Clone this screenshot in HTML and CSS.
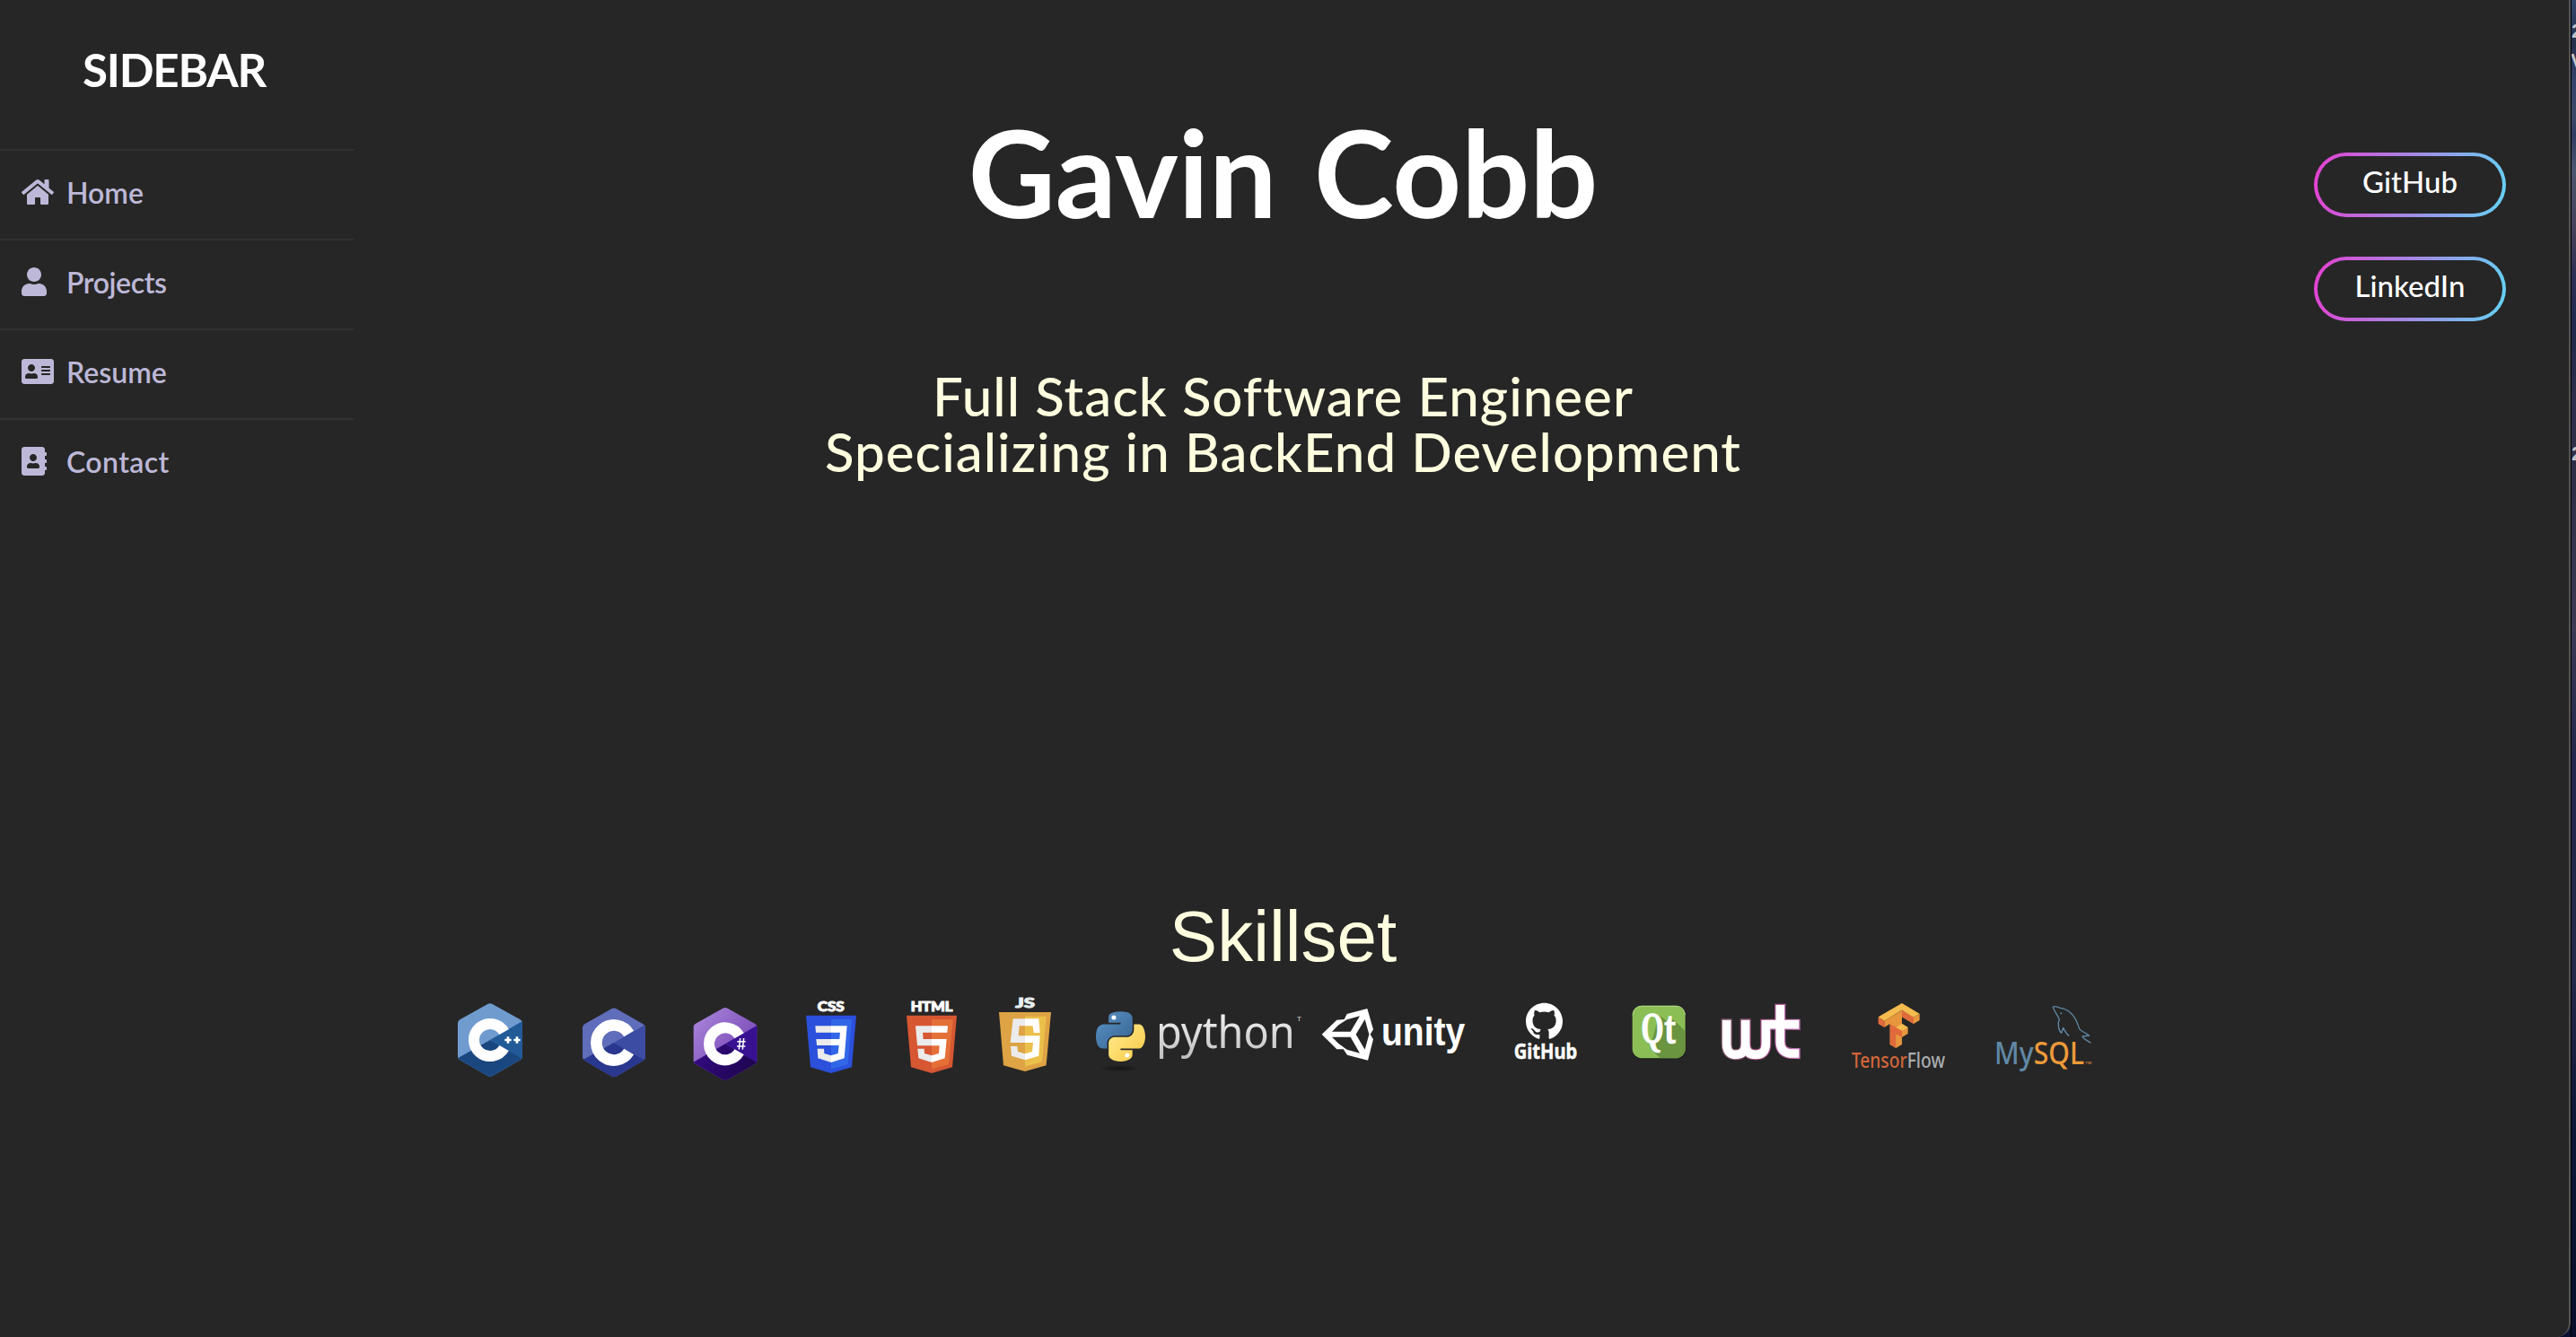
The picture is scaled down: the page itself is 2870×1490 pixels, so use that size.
FILE: index.html
```html
<!DOCTYPE html>
<html lang="en">
<head>
<meta charset="utf-8">
<title>Gavin Cobb</title>
<link rel="stylesheet" href="styles.css">
</head>
<body>
<div class="desktop">
  <div class="window">
    <nav class="sidebar">
      <header class="sidebar-title">SIDEBAR</header>
      <ul class="menu">
        <li><a><svg class="icon" viewBox="0 0 576 512"><path d="M280.37 148.26L96 300.11V464a16 16 0 0 0 16 16l112.06-.29a16 16 0 0 0 15.92-16V368a16 16 0 0 1 16-16h64a16 16 0 0 1 16 16v95.64a16 16 0 0 0 16 16.05L464 480a16 16 0 0 0 16-16V300L295.67 148.26a12.19 12.19 0 0 0-15.3 0zM571.6 251.47L488 182.56V44.05a12 12 0 0 0-12-12h-56a12 12 0 0 0-12 12v72.61L318.47 43a48 48 0 0 0-61 0L4.34 251.47a12 12 0 0 0-1.6 16.9l25.5 31A12 12 0 0 0 45.15 301l235.22-193.74a12.19 12.19 0 0 1 15.3 0L530.9 301a12 12 0 0 0 16.9-1.6l25.5-31a12 12 0 0 0-1.7-16.93z"/></svg><span>Home</span></a></li>
        <li><a><svg class="icon" viewBox="0 0 576 512"><path d="M224 256c70.7 0 128-57.3 128-128S294.7 0 224 0 96 57.3 96 128s57.3 128 128 128zm89.6 32h-16.7c-22.2 10.2-46.9 16-72.9 16s-50.6-5.8-72.9-16h-16.7C60.2 288 0 348.2 0 422.4V464c0 26.5 21.5 48 48 48h352c26.5 0 48-21.5 48-48v-41.6c0-74.2-60.2-134.4-134.4-134.4z"/></svg><span class="tight">Projects</span></a></li>
        <li><a><svg class="icon" viewBox="0 0 576 512"><path d="M528 32H48C21.5 32 0 53.5 0 80v352c0 26.5 21.5 48 48 48h480c26.5 0 48-21.5 48-48V80c0-26.5-21.5-48-48-48zm-352 96c35.3 0 64 28.7 64 64s-28.7 64-64 64-64-28.7-64-64 28.7-64 64-64zm112 236.8c0 10.6-10 19.2-22.4 19.2H86.4C74 384 64 375.4 64 364.8v-19.2c0-31.8 30.1-57.6 67.2-57.6h5c12.3 5.1 25.7 8 39.8 8s27.6-2.9 39.8-8h5c37.1 0 67.2 25.8 67.2 57.6v19.2zM512 312c0 4.4-3.6 8-8 8H360c-4.4 0-8-3.6-8-8v-16c0-4.4 3.6-8 8-8h144c4.4 0 8 3.6 8 8v16zm0-64c0 4.4-3.6 8-8 8H360c-4.4 0-8-3.6-8-8v-16c0-4.4 3.6-8 8-8h144c4.4 0 8 3.6 8 8v16zm0-64c0 4.4-3.6 8-8 8H360c-4.4 0-8-3.6-8-8v-16c0-4.4 3.6-8 8-8h144c4.4 0 8 3.6 8 8v16z"/></svg><span>Resume</span></a></li>
        <li><a><svg class="icon" viewBox="0 0 576 512"><path d="M436 160c6.6 0 12-5.4 12-12v-40c0-6.6-5.4-12-12-12h-20V48c0-26.5-21.5-48-48-48H48C21.5 0 0 21.5 0 48v416c0 26.5 21.5 48 48 48h320c26.5 0 48-21.5 48-48v-48h20c6.6 0 12-5.4 12-12v-40c0-6.6-5.4-12-12-12h-20v-64h20c6.6 0 12-5.4 12-12v-40c0-6.6-5.4-12-12-12h-20v-64h20zm-228-32c35.3 0 64 28.7 64 64s-28.7 64-64 64-64-28.7-64-64 28.7-64 64-64zm112 236.8c0 10.6-10 19.2-22.4 19.2H118.4C106 384 96 375.4 96 364.8v-19.2c0-31.8 30.1-57.6 67.2-57.6h5c12.3 5.1 25.7 8 39.8 8s27.6-2.9 39.8-8h5c37.1 0 67.2 25.8 67.2 57.6v19.2z"/></svg><span class="loose">Contact</span></a></li>
      </ul>
    </nav>

    <main class="main">
      <h1 class="name">Gavin Cobb</h1>
      <p class="tagline">Full Stack Software Engineer<br>Specializing in BackEnd Development</p>
      <h2 class="skills-title">Skillset</h2>
      <div class="skills">
        <svg class="logo cpp" viewBox="45 0 246 390">
          <clipPath id="hexCpp"><path d="M160 87Q168 82 176 87L269 139Q276 143 276 151V262Q276 270 269 274L176 327Q168 332 160 327L67 274Q60 270 60 262V151Q60 143 67 139Z"/></clipPath>
          <g clip-path="url(#hexCpp)"><path fill="#6f9bcf" d="M60 80H276V330H60Z"/><path fill="#1a4780" d="M56 270L168 207L280 270V335H56Z"/><path fill="#225a98" d="M168 207L280 142V272Z"/></g>
          <path class="ring" stroke-width="36" d="M214.800 180A54 54 0 1 0 214.800 234"/>
          <path class="plus" d="M217 207H239M228 196V218M247 207H269M258 196V218"/>
        </svg>
        <svg class="logo c" viewBox="450 0 252 390">
          <clipPath id="hexC"><path d="M575 102Q582 98 589 102L680 154Q687 158 687 166V264Q687 272 680 276L589 329Q582 333 575 329L484 276Q477 272 477 264V166Q477 158 484 154Z"/></clipPath>
          <g clip-path="url(#hexC)"><path fill="#5f6dba" d="M477 98H687V333H477Z"/><path fill="#2a378e" d="M473 276L582 216L691 276V335H473Z"/><path fill="#3c4ca3" d="M582 216L691 154V278Z"/></g>
          <path class="ring" stroke-width="38" d="M632 186A58.500 58.500 0 1 0 632 246"/>
        </svg>
        <svg class="logo csharp" viewBox="831 0 246 390">
          <defs><linearGradient id="csA" x1="0" y1="0" x2="1" y2="1"><stop offset="0" stop-color="#ac8ade"/><stop offset=".6" stop-color="#8355bd"/></linearGradient><linearGradient id="csB" x1="0" y1="0" x2="1" y2=".4"><stop offset="0" stop-color="#370c8a"/><stop offset="1" stop-color="#1e0550"/></linearGradient>
          <clipPath id="hexCs"><path d="M946 101Q954 97 962 101L1054 153Q1061 157 1061 165V275Q1061 283 1054 287L962 340Q954 344 946 340L854 287Q847 283 847 275V165Q847 157 854 153Z"/></clipPath></defs>
          <g clip-path="url(#hexCs)"><path fill="url(#csA)" d="M847 97H1061V344H847Z"/><path fill="url(#csB)" d="M843 284L954 220L1065 284V346H843Z"/><path fill="#371192" d="M954 220L1065 156V286Z"/></g>
          <path class="ring" stroke-width="36" d="M1000.800 193A54 54 0 1 0 1000.800 247"/>
          <path fill="none" stroke="#fff" stroke-width="4.500" d="M1004 201L1000 239M1016 201L1012 239M994 212H1022M993 228H1021"/>
        </svg>
        <svg class="logo css" viewBox="75 0 186 390">
          <defs><linearGradient id="h168" gradientUnits="userSpaceOnUse" x1="167" x2="169" y1="0" y2="0"><stop offset="0" stop-color="#ebebeb"/><stop offset="1" stop-color="#fff"/></linearGradient></defs>
          <text class="badge" x="122" y="110" textLength="90" lengthAdjust="spacingAndGlyphs">CSS</text>
          <path fill="#2b50dc" d="M84 125H252L237 298L168 318L99 298Z"/><path fill="#3268e8" d="M168 138H237L224 289L168 304Z"/>
          <path fill="url(#h168)" d="M115 160H221L212 268L168 282L124 268L122 236H144L145 252L168 259L191 252L194 225H120L118 204H196L198 182H117Z"/>
        </svg>
        <svg class="logo html" viewBox="411 0 186 390">
          <defs><linearGradient id="h504" gradientUnits="userSpaceOnUse" x1="503" x2="505" y1="0" y2="0"><stop offset="0" stop-color="#ebebeb"/><stop offset="1" stop-color="#fff"/></linearGradient></defs>
          <text class="badge" x="434" y="110" textLength="140" lengthAdjust="spacingAndGlyphs">HTML</text>
          <path fill="#d65732" d="M420 125H588L573 298L504 318L435 298Z"/><path fill="#e47038" d="M504 138H575L561 289L504 304Z"/>
          <path fill="url(#h504)" d="M450 160H558L556 182H474L476 204H554L548 268L504 282L460 268L457 236H479L480 252L504 259L528 252L530 226H456Z"/>
        </svg>
        <svg class="logo js" viewBox="720 0 192 390">
          <defs><linearGradient id="h816" gradientUnits="userSpaceOnUse" x1="815" x2="817" y1="0" y2="0"><stop offset="0" stop-color="#ebebeb"/><stop offset="1" stop-color="#fff"/></linearGradient></defs>
          <text class="badge pale" x="784" y="98" textLength="65" lengthAdjust="spacingAndGlyphs">JS</text>
          <path fill="#dda344" d="M729 114H903L887 292L816 312L744 292Z"/><path fill="#ebc04a" d="M816 128H887L873 280L816 296Z"/>
          <path fill="url(#h816)" d="M776 136H862L866 183H845L842 160H797L794 193H866L862 260L816 274L771 260L768 228H790L792 246L816 253L840 246L843 216H767Z"/>
        </svg>
        <svg class="logo python" viewBox="54 0 702 390">
          <defs><linearGradient id="pyA" x1="0" y1="0" x2="1" y2="1"><stop offset="0" stop-color="#5a93c7"/><stop offset="1" stop-color="#36638f"/></linearGradient><linearGradient id="pyB" x1="0" y1="0" x2="1" y2="1"><stop offset=".2" stop-color="#ffe681"/><stop offset="1" stop-color="#f6c746"/></linearGradient><radialGradient id="pyS"><stop offset="0" stop-color="#151515"/><stop offset="1" stop-color="#262626"/></radialGradient>
          <linearGradient id="pyT" x1="0" y1="0" x2="0" y2="1"><stop offset="0" stop-color="#fff"/><stop offset="1" stop-color="#bbb"/></linearGradient></defs>
          <ellipse cx="142" cy="302" rx="68" ry="13" fill="url(#pyS)"/>
          <g transform="translate(42.200 108.800) scale(1.613)"><path fill="url(#pyA)" d="M63.391 1.988c-4.222.02-8.252.379-11.8 1.007-10.45 1.846-12.346 5.71-12.346 12.837v9.411h24.693v3.137H29.977c-7.176 0-13.46 4.313-15.426 12.521-2.268 9.405-2.368 15.275 0 25.096 1.755 7.311 5.947 12.519 13.124 12.519h8.491V67.234c0-8.151 7.051-15.34 15.426-15.34h24.665c6.866 0 12.346-5.654 12.346-12.548V15.833c0-6.693-5.646-11.72-12.346-12.837-4.244-.706-8.645-1.027-12.866-1.008z"/><path fill="url(#pyB)" d="M91.682 28.38v10.966c0 8.5-7.208 15.655-15.426 15.655H51.591c-6.756 0-12.346 5.783-12.346 12.549v23.515c0 6.691 5.818 10.628 12.346 12.547 7.816 2.297 16.221 2.713 24.665 0 6.216-1.801 12.346-5.423 12.346-12.547v-9.412H63.938v-3.138h37.012c7.176 0 9.852-5.005 12.348-12.519 2.578-7.735 2.467-15.174 0-25.096-1.774-7.145-5.161-12.521-12.348-12.521h-9.268z"/><circle cx="50" cy="14.300" r="4.700" fill="#fff"/><circle cx="77.800" cy="92.600" r="4.700" fill="#fff"/></g>
          <text class="python-word" x="264" y="235" textLength="464" lengthAdjust="spacingAndGlyphs" fill="url(#pyT)">python</text>
          <text class="tm" x="735" y="144" font-size="24" fill="#ddd">T</text>
        </svg>
        <svg class="logo unity" viewBox="810 0 495 390">
          <path fill="#fff" fill-rule="evenodd" d="M818 188L868 140L893 138L902 120L970 102L990 172L980 188L990 205L972 275L903 257L890 238H868ZM852 179H914L945 127L902 139L874 157ZM852 197H914L945 251L902 239L874 219ZM932 188L962 239L976 188L962 138Z"/>
          <text class="unity-word" x="1017" y="225" textLength="280" lengthAdjust="spacingAndGlyphs">unity</text>
        </svg>
        <svg class="logo github" viewBox="75 0 225 390">
          <path fill="#fff" transform="translate(120 83) scale(7.690)" d="M8 0C3.580 0 0 3.580 0 8c0 3.540 2.290 6.530 5.470 7.590.4.07.55-.17.55-.38 0-.19-.01-.82-.01-1.490-2.010.37-2.530-.49-2.690-.94-.09-.23-.48-.94-.82-1.130-.28-.15-.68-.52-.01-.53.63-.01 1.080.58 1.230.82.72 1.210 1.870.87 2.330.66.07-.52.28-.87.51-1.070-1.780-.2-3.640-.89-3.640-3.950 0-.87.31-1.590.82-2.150-.08-.2-.36-1.020.08-2.120 0 0 .67-.21 2.200.82.64-.18 1.320-.27 2-.27.68 0 1.360.09 2 .27 1.530-1.040 2.200-.82 2.200-.82.44 1.100.16 1.920.08 2.120.51.56.82 1.270.82 2.150 0 3.070-1.870 3.750-3.650 3.950.29.25.54.73.54 1.480 0 1.070-.01 1.930-.01 2.200 0 .21.15.46.55.38A8.013 8.013 0 0 0 16 8c0-4.420-3.580-8-8-8z"/>
          <text class="github-word" x="80" y="269" textLength="212" lengthAdjust="spacingAndGlyphs">GitHub</text>
        </svg>
        <svg class="logo qt" viewBox="465 0 195 390">
          <clipPath id="qtBox"><rect x="476" y="92" width="177" height="176" rx="32"/></clipPath>
          <rect x="477" y="95" width="178" height="176" rx="32" fill="#171717"/>
          <g clip-path="url(#qtBox)"><path fill="#8bbf56" d="M470 90H660V270H470Z"/><path fill="#6a9440" d="M565 124L600 150L612 137L660 184V270H572L535 235Z"/><path fill="none" stroke="#b4d98e" stroke-width="4" d="M476 124Q476 93 508 93H621Q653 93 653 124"/></g>
          <text class="qt-word" x="504" y="219" textLength="118" lengthAdjust="spacingAndGlyphs">Qt</text>
        </svg>
        <svg class="logo wt" viewBox="762 0 285 390">
          <defs><linearGradient id="wtG" gradientUnits="userSpaceOnUse" x1="772" x2="1038" y1="0" y2="0"><stop offset="0" stop-color="#80596a"/><stop offset=".5" stop-color="#a04b80"/><stop offset="1" stop-color="#c774bd"/></linearGradient>
          <path id="wtMark" d="M791 140V220Q791 256 822 256Q854 256 854 220V140M854 220Q854 256 888 256Q922 256 922 220V155H1033M970 90V212Q970 252 1012 252H1033"/></defs>
          <use href="#wtMark" fill="none" stroke="url(#wtG)" stroke-width="36"/>
          <path stroke="url(#wtG)" stroke-width="4" d="M773 138H809M836 138H872M952 88H989M1035 137V174M1035 234V271"/>
          <use href="#wtMark" fill="none" stroke="#fff" stroke-width="29"/>
        </svg>
        <svg class="logo tensorflow" viewBox="90 0 330 390">
          <path fill="#e8963e" d="M208 143L267 108L306 131L326 119V141L306 153L267 130V152L287 165V186L267 198V222L247 234L227 222V153L208 165Z"/>
          <path fill="#e06a3b" d="M188 130L208 143V165L188 153ZM227 154L247 165V234L227 222ZM267 108L306 131V153L267 130ZM247 165L267 176V198L247 187Z"/>
          <path fill="#f4bb4f" d="M188 130L267 84L326 119L306 131L267 107L208 143ZM247 165L267 153L287 165L267 176Z"/>
          <text class="tf-word" x="98" y="299" textLength="313" lengthAdjust="spacingAndGlyphs"><tspan fill="#d3663a">Tensor</tspan><tspan fill="#a9adb0">Flow</tspan></text>
        </svg>
        <svg class="logo mysql" viewBox="573 0 336 390">
          <path fill="none" stroke="#6188a5" stroke-width="4" stroke-linejoin="round" d="M826 193C818 188 812 178 806 166L800 184C790 176 787 152 793 138C786 120 774 108 772 97C778 92 788 96 796 100C830 104 850 135 860 170C868 180 880 182 893 192L870 195C875 206 888 208 898 217"/>
          <circle cx="799" cy="118" r="3" fill="#6188a5"/>
          <text class="my-word" x="576" y="288" textLength="300" lengthAdjust="spacingAndGlyphs"><tspan fill="#6188a5">My</tspan><tspan fill="#ee9a3a">SQL</tspan></text>
          <text class="tm" x="879" y="288" font-size="13" fill="#ee9a3a" textLength="22" lengthAdjust="spacingAndGlyphs">TM</text>
        </svg>
      </div>
    </main>

    <aside class="links">
      <a class="pill">GitHub</a>
      <a class="pill">LinkedIn</a>
    </aside>
  </div>
  <div class="wallpaper"><span class="file f1">2</span><span class="file f2">V</span><span class="file f3">2</span></div>
</div>
</body>
</html>
```
FILE: styles.css
```css
* { box-sizing: border-box; margin: 0; padding: 0; }
body { width: 2870px; height: 1490px; overflow: hidden; background: #000; font-family: Lato, "Liberation Sans", sans-serif; }
.desktop { display: grid; grid-template-columns: 2864px 6px; height: 1490px; background: #0b1230; }
.window { display: grid; grid-template-columns: 394px 1fr 394px; background: #262626; border-right: 2px solid #555; border-bottom-right-radius: 16px; }

.sidebar-title { height: 166px; padding: 2px 0 0 92px; line-height: 151px; font-size: 51px; font-weight: 700; letter-spacing: -1.2px; color: #fff; }
.menu { list-style: none; }
.menu li { height: 100px; border-top: 2px solid #313132; }
.menu a { display: flex; align-items: flex-start; padding-left: 24px; font-size: 32px; font-weight: 600; line-height: 94px; color: #bdb8d7; }
.menu .tight { letter-spacing: -.4px; }
.menu .loose { letter-spacing: .4px; }
.icon { width: 36px; height: 32px; margin: 30px 14px 0 0; fill: #bdb8d7; }

.main { padding: 112px 3px 0 0; text-align: center; white-space: nowrap; }
.name { font-size: 134px; line-height: 160px; font-weight: 700; word-spacing: 9px; color: #fff; }
.tagline { margin-top: 138px; font-size: 60px; line-height: 62px; font-weight: 500; letter-spacing: 1px; color: #ffffe0; }
.skills-title { margin-top: 465px; font: 400 80px/90px "Liberation Sans", Arial, sans-serif; color: #ffffe0; }
.skills { display: flex; margin-top: 1px; padding-left: 111px; }

.logo { flex: none; height: 130px; overflow: visible; }
.cpp { width: 82px; }
.c { width: 84px; margin-left: 53px; }
.csharp { width: 82px; margin-left: 43px; }
.css { width: 62px; margin-left: 46px; }
.html { width: 62px; margin-left: 50px; }
.js { width: 64px; margin-left: 41px; }
.python { width: 234px; margin-left: 44px; }
.unity { width: 165px; margin-left: 18px; }
.github { width: 75px; margin-left: 50px; }
.qt { width: 65px; margin-left: 55px; }
.wt { width: 95px; margin-left: 34px; }
.tensorflow { width: 110px; margin-left: 51px; }
.mysql { width: 112px; margin-left: 51px; }

.ring { fill: none; stroke: #fff; }
.plus { fill: none; stroke: #fff; stroke-width: 8; }
.badge { font: 900 44px Lato, sans-serif; fill: #fff; stroke: #fff; stroke-width: 3; }
.pale { fill: #e6eef0; stroke: #e6eef0; }
.python-word { font: 400 150px "Noto Sans", sans-serif; }
.unity-word { font: 700 132px "Liberation Sans", sans-serif; fill: #fff; }
.github-word { font: 700 72px "Noto Sans", sans-serif; fill: #fff; stroke: #fff; stroke-width: 1.5; }
.qt-word { font: 700 136px "Noto Serif", "Liberation Serif", serif; fill: #fff; stroke: #fff; stroke-width: 2; }
.tf-word { font: 500 68px "Noto Sans", sans-serif; }
.my-word { font: 500 102px "Noto Sans", sans-serif; }
.tm { font-family: "Liberation Sans", sans-serif; }

.links { display: flex; flex-direction: column; align-items: flex-end; gap: 44px; padding: 170px 70px 0 0; }
.pill { width: 214px; height: 72px; border: 4px solid transparent; border-radius: 36px; background: linear-gradient(#262626, #262626) padding-box, linear-gradient(100deg, #e63fd2, #63d3f5) border-box; color: #fff; font-size: 33px; font-weight: 500; line-height: 57px; text-align: center; }

.wallpaper { position: relative; overflow: hidden; border-left: 1px solid #000; background: linear-gradient(#34476b 0, #26304d 50px, #35436b 90px, #3c4966 130px, #303b62 150px, #4b566e 190px, #453f58 260px, #2b2f54 310px, #1f2a4c 370px, #302f4c 450px, #302f48 540px, #3c3a55 700px, #20264b 860px, #25294a 1080px, #0e1737 1250px, #070f2b 1490px); }
.file { position: absolute; left: 0; font: 700 22px "Liberation Sans", sans-serif; line-height: 20px; color: #c4c4c8; }
.f1 { top: 25px; }
.f2 { top: 58px; left: -1px; }
.f3 { top: 496px; }
```
